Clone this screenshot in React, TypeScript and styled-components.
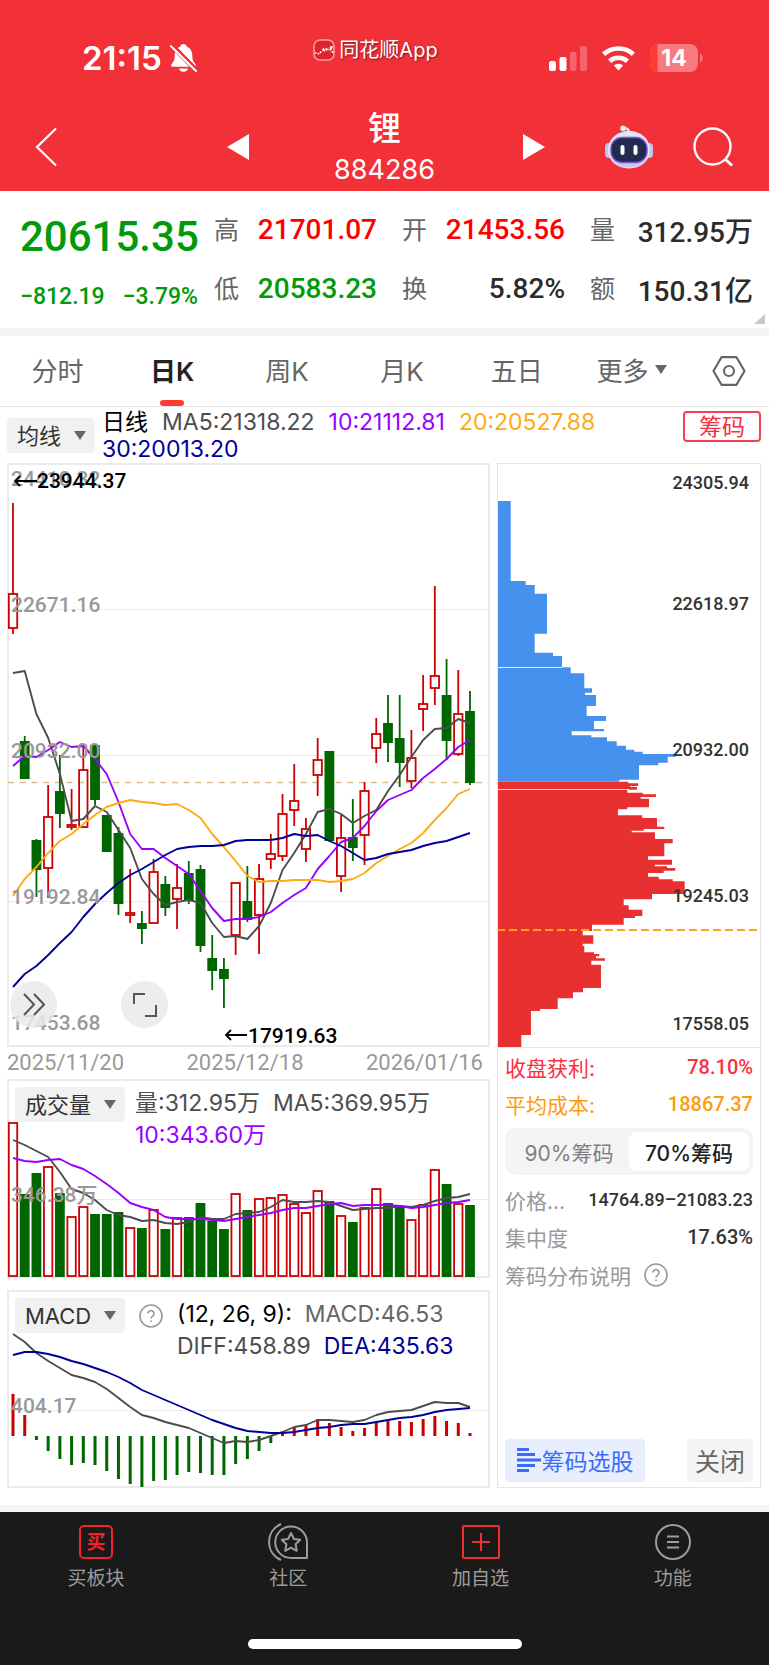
import React from "react";
import styled, { createGlobalStyle } from "styled-components";

const RED = "#cc0000";
const GREEN = "#006600";
const GRAY = "#4d4d4d";
const PURPLE = "#9900ff";
const ORANGE = "#ffaa11";
const NAVY = "#000099";
const LINE = "#ebebeb";
const UI = `Inter, "Noto Sans CJK SC", sans-serif`;
const NUM = `Roboto, "Noto Sans CJK SC", sans-serif`;

const GlobalStyle = createGlobalStyle`
  *, *::before, *::after { box-sizing: border-box; }
  body { margin: 0; background: #fff; font-family: ${UI}; color: #333; }
  button, select { font: inherit; color: inherit; border: 0; background: none; padding: 0; margin: 0; cursor: pointer; }
  dl, dt, dd, h1, p { margin: 0; font-weight: 400; }
  svg { display: block; }
`;

/* ---------- series ---------- */

type Candle = [up: 0 | 1, high: number, top: number, bottom: number, low: number];

const candles: Candle[] = [
  [1, 503, 594, 628, 634], [0, 736, 741, 779, 779], [0, 839, 840, 870, 897], [1, 785, 817, 868, 898],
  [0, 755, 791, 814, 828], [1, 789, 825, 827, 830], [1, 747, 770, 827, 827], [0, 745, 745, 800, 805],
  [0, 815, 815, 852, 852], [0, 827, 833, 904, 915], [1, 869, 913, 915, 923], [0, 911, 923, 929, 944],
  [1, 859, 872, 923, 923], [0, 876, 884, 908, 916], [1, 864, 888, 899, 929], [0, 861, 873, 901, 904],
  [0, 865, 869, 946, 952], [0, 935, 958, 971, 990], [0, 958, 969, 979, 1008], [1, 882, 883, 935, 955],
  [0, 866, 901, 920, 922], [1, 864, 879, 915, 954], [1, 834, 854, 859, 869], [1, 794, 814, 856, 861],
  [1, 764, 801, 810, 826], [1, 818, 829, 849, 862], [1, 738, 760, 775, 796], [0, 751, 751, 841, 841],
  [1, 815, 838, 876, 892], [0, 799, 837, 848, 861], [1, 782, 791, 835, 865], [1, 718, 734, 748, 763],
  [0, 695, 723, 743, 762], [0, 695, 738, 763, 787], [1, 730, 758, 781, 788], [1, 675, 704, 709, 731],
  [1, 586, 676, 688, 705], [0, 659, 695, 741, 760], [1, 670, 714, 754, 756], [0, 691, 711, 783, 785],
];

const ma5 = [673, 671, 714, 738, 774, 821, 819, 806, 812, 830, 848, 879, 894, 905, 902, 900, 903, 923, 937, 936, 939, 926, 903, 870, 853, 834, 812, 809, 814, 823, 816, 810, 791, 775, 757, 740, 729, 728, 719, 723];
const ma10 = [766, 756, 757, 750, 742, 747, 746, 759, 774, 802, 834, 849, 849, 858, 866, 874, 891, 908, 921, 919, 919, 917, 912, 903, 895, 888, 869, 856, 842, 838, 826, 811, 800, 795, 790, 778, 769, 759, 747, 740];
const ma20 = [896, 879, 867, 853, 841, 834, 824, 815, 807, 803, 800, 802, 803, 805, 804, 810, 818, 834, 847, 861, 876, 882, 881, 881, 880, 880, 880, 882, 881, 879, 873, 863, 856, 849, 843, 833, 820, 808, 794, 789];
const ma30 = [987, 974, 966, 955, 943, 932, 917, 904, 893, 883, 875, 869, 862, 855, 849, 847, 846, 846, 845, 841, 840, 840, 840, 838, 834, 836, 835, 841, 846, 853, 860, 858, 854, 852, 850, 846, 843, 841, 837, 833];

const volumes = [1123, 1195, 1174, 1167, 1194, 1217, 1207, 1215, 1215, 1213, 1228, 1229, 1210, 1230, 1218, 1218, 1204, 1222, 1230, 1194, 1211, 1199, 1198, 1195, 1204, 1213, 1191, 1202, 1216, 1223, 1208, 1189, 1204, 1207, 1220, 1205, 1170, 1185, 1204, 1206];
const vol5 = [1140, 1145, 1151, 1157, 1172, 1189, 1193, 1200, 1210, 1215, 1217, 1221, 1220, 1223, 1224, 1222, 1217, 1219, 1219, 1214, 1213, 1212, 1207, 1200, 1202, 1202, 1201, 1202, 1206, 1210, 1209, 1208, 1208, 1206, 1207, 1205, 1201, 1198, 1197, 1194];
const vol10 = [1158, 1161, 1162, 1160, 1159, 1165, 1169, 1176, 1184, 1193, 1203, 1207, 1210, 1217, 1219, 1219, 1219, 1220, 1221, 1219, 1217, 1215, 1213, 1210, 1208, 1208, 1206, 1204, 1203, 1206, 1205, 1205, 1205, 1206, 1208, 1207, 1205, 1203, 1202, 1200];

const macd = [1394, 1415, 1440, 1451, 1459, 1465, 1463, 1465, 1471, 1479, 1484, 1487, 1481, 1480, 1475, 1472, 1473, 1475, 1475, 1464, 1459, 1451, 1443, 1433, 1427, 1425, 1419, 1423, 1427, 1431, 1428, 1422, 1419, 1421, 1422, 1419, 1416, 1421, 1423, 1433];
const diff = [1334, 1342, 1353, 1361, 1368, 1375, 1378, 1382, 1389, 1398, 1407, 1415, 1418, 1422, 1425, 1428, 1433, 1438, 1443, 1441, 1442, 1440, 1436, 1432, 1427, 1425, 1420, 1420, 1421, 1422, 1420, 1415, 1412, 1411, 1410, 1406, 1402, 1403, 1403, 1407];
const dea = [1355, 1352, 1352, 1354, 1357, 1361, 1364, 1368, 1372, 1377, 1383, 1390, 1395, 1400, 1405, 1410, 1415, 1420, 1424, 1428, 1431, 1432, 1433, 1433, 1432, 1430, 1428, 1427, 1425, 1424, 1424, 1422, 1420, 1418, 1417, 1415, 1412, 1410, 1409, 1408];

/* chip profile: [end of the step, bar width], in thirds of a unit */
const lossSteps: [number, number][] = [
  [363, 65], [375, 110], [401, 137], [521, 174], [578, 137], [588, 192], [622, 219], [640, 245], [685, 286],
  [698, 309], [705, 288], [738, 321], [768, 293], [783, 351], [807, 315], [814, 345], [826, 248], [832, 307],
  [844, 354], [857, 383], [869, 411], [875, 436], [882, 461], [890, 561], [908, 536], [916, 508], [959, 450], [965, 391],
];
const gainSteps: [number, number][] = [
  [40, 418], [48, 448], [51, 424], [59, 444], [68, 415], [73, 461], [81, 501], [86, 455], [112, 480], [118, 415],
  [136, 387], [144, 460], [170, 504], [177, 526], [182, 464], [187, 428], [207, 498], [220, 551], [259, 526],
  [269, 477], [284, 549], [289, 497], [294, 534], [302, 559], [309, 524], [320, 477], [328, 509], [334, 551],
  [372, 587], [388, 489], [406, 404], [419, 419], [438, 460], [444, 438], [464, 404], [483, 309], [496, 281],
  [521, 313], [528, 281], [547, 286], [552, 315], [559, 331], [565, 321], [572, 348], [584, 307], [654, 336],
  [667, 282], [685, 252], [717, 206], [723, 153], [795, 126], [831, 97],
];

const xAt = (i: number) => 13 + (i * 457) / 39;

const Curve = ({ data, color }: { data: number[]; color: string }) => (
  <polyline points={data.map((y, i) => `${xAt(i).toFixed(1)},${y}`).join(" ")} fill="none" stroke={color} strokeWidth="1.9" strokeLinejoin="round" />
);

const stepPath = (start: number, originY: number, steps: [number, number][]) => {
  let d = `M499 ${(originY + start / 3).toFixed(1)}`;
  steps.forEach(([end, w]) => {
    d += `H${(490 + w / 3).toFixed(1)}V${(originY + end / 3).toFixed(1)}`;
  });
  return d + "H499Z";
};

/* ---------- header ---------- */

const Header = styled.header`
  background: #f23038;
  color: #fff;
`;
const StatusBar = styled.div`
  display: grid;
  grid-template-columns: 1fr auto 1fr;
  align-items: start;
  height: 104px;
  padding: 40px 66px 0 48px;
`;
const StatusSide = styled.div<{ $end?: boolean }>`
  display: flex;
  align-items: center;
  height: 36px;
  gap: ${(p) => (p.$end ? "15px" : "8px")};
  padding-left: ${(p) => (p.$end ? "0" : "34px")};
  justify-content: ${(p) => (p.$end ? "flex-end" : "flex-start")};
`;
const Clock = styled.span`
  font-size: 33px;
  font-weight: 600;
  line-height: 36px;
`;
const AppTag = styled.div`
  display: flex;
  align-items: center;
  gap: 4px;
  height: 20px;
  font-size: 20px;
  line-height: 20px;
  text-shadow: 1px 1px 2px rgba(0, 0, 0, 0.5);
`;
const TitleBar = styled.div`
  display: grid;
  grid-template-columns: 1fr 271px 1fr;
  align-items: center;
  height: 87px;
`;
const TitleSide = styled.div<{ $end?: boolean }>`
  display: flex;
  align-items: center;
  justify-content: space-between;
  padding: ${(p) => (p.$end ? "0 36px 2px 3px" : "0 0 2px 35px")};
`;
const IconGroup = styled.div`
  display: flex;
  align-items: center;
  gap: 40px;
`;
const IconButton = styled.button`
  display: grid;
  place-items: center;
`;
const Title = styled.div`
  text-align: center;
  h1 { font-size: 33px; font-weight: 500; line-height: 44px; }
  p { font-size: 27px; line-height: 40px; }
`;

/* ---------- quote ---------- */

const Quote = styled.section`
  position: relative;
  display: grid;
  grid-template-columns: 178px 1fr;
  column-gap: 16px;
  height: 137px;
  padding: 9px 16px 0 20px;
  font-family: ${NUM};
`;
const Price = styled.div`
  color: #009a0a;
  padding-top: 7px;
  font-weight: 500;
`;
const Last = styled.div`
  font-size: 42px;
  line-height: 59px;
`;
const Change = styled.div`
  display: flex;
  justify-content: space-between;
  font-size: 23px;
  line-height: 62px;
`;
const Stats = styled.dl`
  display: grid;
  grid-template-columns: repeat(3, 1fr);
  grid-auto-rows: 59px;
  column-gap: 25px;
`;
const Stat = styled.div<{ $color: string }>`
  display: flex;
  align-items: center;
  justify-content: space-between;
  white-space: nowrap;
  dt { padding-bottom: 3px; font-size: 25px; color: #666; }
  dd { font-size: 28px; font-weight: 500; color: ${(p) => p.$color}; }
`;
const Corner = styled.svg`
  position: absolute;
  right: 4px;
  bottom: 4px;
`;
const Band = styled.div<{ $h: number }>`
  height: ${(p) => p.$h}px;
  background: #f4f4f4;
`;

/* ---------- tabs ---------- */

const Tabs = styled.nav`
  display: grid;
  grid-template-columns: repeat(6, 1fr) 80px;
  height: 71px;
  border-bottom: 1px solid #e6e6e6;
`;
const Tab = styled.button<{ $active?: boolean }>`
  display: flex;
  align-items: center;
  justify-content: center;
  gap: 6px;
  padding-bottom: 4px;
  font-size: 26px;
  font-weight: ${(p) => (p.$active ? 600 : 400)};
  color: ${(p) => (p.$active ? "#222" : "#666")};
  position: relative;
  &::after {
    content: "";
    display: ${(p) => (p.$active ? "block" : "none")};
    position: absolute;
    bottom: 0;
    width: 24px;
    height: 6px;
    border-radius: 3px;
    background: #ff3b30;
  }
`;

/* ---------- indicator bars ---------- */

const Picker = styled.span`
  position: relative;
  flex: none;
  display: inline-flex;
  align-items: center;
  background: #f1f1f1;
  border-radius: 4px;
  select {
    appearance: none;
    height: 35px;
    padding: 0 33px 0 10px;
    font-size: 22px;
    color: #333;
  }
  svg { position: absolute; right: 9px; pointer-events: none; }
`;
const MaBar = styled.div`
  display: flex;
  align-items: flex-start;
  gap: 7px;
  height: 56px;
  padding: 2px 8px 0 7px;
  ${Picker} { margin-top: 9px; }
`;
const Values = styled.div<{ $lh: number; $gap: number }>`
  flex: 1;
  min-width: 0;
  display: flex;
  flex-wrap: wrap;
  column-gap: ${(p) => p.$gap}px;
  font-size: 23px;
  line-height: ${(p) => p.$lh}px;
`;
const Value = styled.span<{ $color: string }>`
  color: ${(p) => p.$color};
  white-space: nowrap;
`;
const ChipToggle = styled.button`
  flex: none;
  width: 78px;
  height: 31px;
  margin-top: 2px;
  border: 2px solid #f5404f;
  border-radius: 4px;
  color: #f5303f;
  font-size: 23px;
  line-height: 26px;
`;

/* ---------- charts ---------- */

const Board = styled.main`
  display: grid;
  grid-template-columns: minmax(0, 1fr) 264px;
  column-gap: 7px;
  padding: 0 8px 17px 7px;
`;
const Column = styled.div`
  display: flex;
  flex-direction: column;
`;
const Panel = styled.section`
  display: grid;
  border: 2px solid ${LINE};
  > * { grid-area: 1 / 1; }
`;
const Plot = styled.svg`
  width: 100%;
  height: auto;
  overflow: visible;
  text { font-family: ${NUM}; font-weight: 500; font-size: 21px; fill: #999; }
  text.mark { fill: #000; }
  text.chip { font-size: 18px; fill: #333; text-anchor: end; }
`;
const Tools = styled.div`
  align-self: end;
  display: flex;
  gap: 64px;
  padding: 0 1px 17px;
  z-index: 1;
`;
const RoundButton = styled.button`
  display: grid;
  place-items: center;
  width: 47px;
  height: 47px;
  border-radius: 50%;
  background: rgba(234, 234, 234, 0.85);
`;
const Dates = styled.div`
  display: flex;
  justify-content: space-between;
  padding: 0 7px 0 0;
  font-family: ${NUM};
  font-size: 22px;
  line-height: 32px;
  color: #999;
`;
const Legend = styled.div<{ $gap: number }>`
  align-self: start;
  display: flex;
  align-items: flex-start;
  gap: ${(p) => p.$gap}px;
  padding: 6px 0 0 6px;
  z-index: 1;
`;
const HelpButton = styled(IconButton)`
  height: 35px;
`;
const Spacer = styled.div`
  height: 12px;
`;

/* ---------- chip panel ---------- */

const ChipPanel = styled.aside`
  display: flex;
  flex-direction: column;
  border: 1px solid #e6e6e6;
`;
const ChipInfo = styled.div`
  flex: 1;
  display: flex;
  flex-direction: column;
  padding: 0 7px 5px;
  border-top: 1px solid #e6e6e6;
`;
const InfoRow = styled.div<{ $color: string; $value: string; $size?: number }>`
  display: flex;
  justify-content: space-between;
  align-items: center;
  height: 37px;
  font-size: 21px;
  color: ${(p) => p.$color};
  white-space: nowrap;
  b { font-family: ${NUM}; font-size: ${(p) => p.$size ?? 20}px; font-weight: 500; color: ${(p) => p.$value}; }
`;
const Segments = styled.div`
  display: grid;
  grid-template-columns: 1fr 1fr;
  height: 47px;
  margin: 6px 0;
  padding: 4px;
  border-radius: 10px;
  background: #f4f4f4;
`;
const Segment = styled.button<{ $active?: boolean }>`
  font-size: 21px;
  border-radius: 8px;
  white-space: nowrap;
  font-weight: ${(p) => (p.$active ? 500 : 400)};
  color: ${(p) => (p.$active ? "#222" : "#808080")};
  background: ${(p) => (p.$active ? "#fff" : "transparent")};
`;
const NoteButton = styled.button`
  display: flex;
  align-items: center;
  gap: 13px;
  height: 40px;
  font-size: 21px;
  color: #999;
`;
const ChipFooter = styled.div`
  display: flex;
  justify-content: space-between;
  margin-top: auto;
`;
const FooterButton = styled.button<{ $primary?: boolean }>`
  display: flex;
  align-items: center;
  justify-content: center;
  gap: 1px;
  height: 43px;
  padding-bottom: 2px;
  width: ${(p) => (p.$primary ? "140px" : "66px")};
  border-radius: 4px;
  font-size: ${(p) => (p.$primary ? "23px" : "25px")};
  color: ${(p) => (p.$primary ? "#3a6cf6" : "#666")};
  background: ${(p) => (p.$primary ? "#e9eeff" : "#f4f4f4")};
`;

/* ---------- bottom bar ---------- */

const Bottom = styled.footer`
  height: 153px;
  background: #1a1a1a;
  color: #9c9c9c;
`;
const BottomNav = styled.nav`
  display: grid;
  grid-template-columns: repeat(4, 1fr);
  height: 127px;
`;
const BottomLink = styled.a`
  display: flex;
  flex-direction: column;
  align-items: center;
  padding-top: 11px;
  gap: 4px;
  font-size: 19px;
  line-height: 28px;
  color: inherit;
  text-decoration: none;
`;
const HomeBar = styled.div`
  width: 274px;
  height: 10px;
  margin: 0 auto;
  border-radius: 5px;
  background: #fff;
`;

/* ---------- icons ---------- */

const Caret = ({ w = 12, h = 9 }: { w?: number; h?: number }) => (
  <svg width={w} height={h} viewBox="0 0 12 9" aria-hidden="true"><path d="M0 0H12L6 9Z" fill="#666" /></svg>
);
const Help = () => (
  <svg width="24" height="24" viewBox="0 0 24 24" fill="none" stroke="#999" strokeWidth="1.6" aria-hidden="true">
    <circle cx="12" cy="12" r="11" />
    <path d="M9 9.6a3 3 0 1 1 4.6 2.5c-1.1.8-1.6 1.2-1.6 2.5" />
    <circle cx="12" cy="17.2" r=".9" fill="#999" stroke="none" />
  </svg>
);
const BellOff = () => (
  <svg width="27" height="28" viewBox="0 0 27 28" aria-hidden="true">
    <path d="M13.500 0c1.800 0 3 1 3.200 2.700 3.800 1.200 5.600 4.500 5.600 8.600 0 5.200 1.200 6.500 3.200 8.900.8 1 .3 2.600-1.200 2.600H2.700c-1.500 0-2-1.600-1.200-2.600 2-2.400 3.200-3.700 3.200-8.900 0-4.100 1.800-7.400 5.600-8.600C10.500 1 11.700 0 13.500 0ZM9 24.500h9c-.4 2-2.200 3.300-4.500 3.300S9.400 26.500 9 24.500Z" fill="#fff" />
    <path d="M1.500 1L26 26" stroke="#f23038" strokeWidth="5" />
    <path d="M.8 2L26 27" stroke="#fff" strokeWidth="2" strokeLinecap="round" />
  </svg>
);
const AppLogo = () => (
  <svg width="22" height="22" viewBox="0 0 22 22" fill="none" aria-hidden="true">
    <rect x="1" y="1" width="20" height="20" rx="6" fill="#e0222b" stroke="#f9a0a3" strokeWidth="1.500" />
    <path d="M2 14.500l1.500-1M5.500 14v1.500M8 12.500l-1 1.500M9.500 11.500l1-1.500 1 2.500M13.500 9l-.5 2.500M14.500 10l1 1M17.500 7.500v3l1.500-2V7M19.500 14v-2" stroke="#fff" strokeWidth="1.500" />
  </svg>
);
const Signal = () => (
  <svg width="38" height="25" viewBox="0 0 38 25" fill="#fff" aria-hidden="true">
    <rect y="15" width="7" height="10" rx="2" />
    <rect x="10.500" y="11" width="7" height="14" rx="2" />
    <rect x="21" y="6" width="6.500" height="19" rx="2" opacity=".25" />
    <rect x="31" y="0" width="7" height="25" rx="2" opacity=".25" />
  </svg>
);
const Wifi = () => (
  <svg width="33" height="25" viewBox="0 0 33 25" aria-hidden="true">
    <path d="M16.500 24.500l-4.700-5a7 7 0 0 1 9.400 0Z" fill="#fff" />
    <path d="M7.600 15.300a13 13 0 0 1 17.800 0" fill="none" stroke="#fff" strokeWidth="4.600" />
    <path d="M1.600 8.300a22 22 0 0 1 29.800 0" fill="none" stroke="#fff" strokeWidth="4.600" />
  </svg>
);
const Battery = () => (
  <svg width="53" height="28" viewBox="0 0 53 28" aria-hidden="true">
    <rect width="48" height="28" rx="8" fill="#f77a7e" />
    <path d="M8 0H7.500V28H8a8 8 0 0 1-8-8V8a8 8 0 0 1 8-8Z" fill="#ff3b30" />
    <path d="M50 9.500c3.500 1.500 3.500 7.500 0 9Z" fill="#f77a7e" />
    <text x="24" y="22" textAnchor="middle" fontSize="23" fontWeight="700" fill="#fff">14</text>
  </svg>
);
const Robot = () => (
  <svg width="48" height="44" viewBox="0 0 48 44" aria-hidden="true">
    <path d="M24 8C24 4 22 3 19 3" stroke="#dcdcf2" strokeWidth="2.500" fill="none" />
    <circle cx="18" cy="3.200" r="2.800" fill="#e9e9f8" />
    <rect x="0" y="18" width="8" height="15" rx="4" fill="#c3c4ea" />
    <rect x="40" y="18" width="8" height="15" rx="4" fill="#c3c4ea" />
    <path d="M24 6c12 0 21 8 21 19 0 10-8 18.500-21 18.500S3 35 3 25C3 14 12 6 24 6Z" fill="#e3e3f6" />
    <path d="M6 33c4 7 10 9.500 18 9.500S38 40 42 33c-4 4-10 5-18 5S10 37 6 33Z" fill="#c9caec" />
    <rect x="6" y="12.500" width="36" height="25" rx="11" fill="#232a50" stroke="#7a50d8" strokeWidth="1.400" />
    <rect x="15.500" y="20" width="4" height="10" rx="2" fill="#fff" />
    <rect x="28.500" y="20" width="4" height="10" rx="2" fill="#fff" />
  </svg>
);

const stats: [string, string, string][] = [
  ["高", "21701.07", "#ff0000"], ["开", "21453.56", "#ff0000"], ["量", "312.95万", "#2b2b2b"],
  ["低", "20583.23", "#009a0a"], ["换", "5.82%", "#2b2b2b"], ["额", "150.31亿", "#2b2b2b"],
];

const Dropdown = ({ label, value }: { label: string; value: string }) => (
  <Picker>
    <select aria-label={label} defaultValue={value}><option>{value}</option></select>
    <Caret />
  </Picker>
);

export default function App() {
  return (
    <>
      <GlobalStyle />
      <Header>
        <StatusBar>
          <StatusSide><Clock>21:15</Clock><BellOff /></StatusSide>
          <AppTag><AppLogo /><span>同花顺App</span></AppTag>
          <StatusSide $end><Signal /><Wifi /><Battery /></StatusSide>
        </StatusBar>
        <TitleBar>
          <TitleSide>
            <IconButton aria-label="返回">
              <svg width="22" height="40" viewBox="0 0 22 40" fill="none" stroke="#fff" strokeWidth="2.200"><path d="M21 1.500L2 20L21 38.500" /></svg>
            </IconButton>
            <IconButton aria-label="上一个">
              <svg width="22" height="26" viewBox="0 0 22 26"><path d="M22 0V26L0 13Z" fill="#fff" /></svg>
            </IconButton>
          </TitleSide>
          <Title><h1>锂</h1><p>884286</p></Title>
          <TitleSide $end>
            <IconButton aria-label="下一个">
              <svg width="22" height="26" viewBox="0 0 22 26"><path d="M0 0V26L22 13Z" fill="#fff" /></svg>
            </IconButton>
            <IconGroup>
              <IconButton aria-label="智能助手"><Robot /></IconButton>
              <IconButton aria-label="搜索">
                <svg width="40" height="40" viewBox="0 0 40 40" fill="none" stroke="#fff" strokeWidth="2.400"><circle cx="19.500" cy="19.500" r="18" /><path d="M32 32l7 6.500" strokeWidth="3" /></svg>
              </IconButton>
            </IconGroup>
          </TitleSide>
        </TitleBar>
      </Header>

      <Quote>
        <Price>
          <Last>20615.35</Last>
          <Change><span>−812.19</span><span>−3.79%</span></Change>
        </Price>
        <Stats>
          {stats.map(([name, value, color]) => (
            <Stat key={name} $color={color}><dt>{name}</dt><dd>{value}</dd></Stat>
          ))}
        </Stats>
        <Corner width="11" height="10" viewBox="0 0 11 10" aria-hidden="true"><path d="M11 0V10H0Z" fill="#c8c8c8" /></Corner>
      </Quote>
      <Band $h={8} />

      <Tabs>
        <Tab>分时</Tab>
        <Tab $active aria-current="true">日K</Tab>
        <Tab>周K</Tab>
        <Tab>月K</Tab>
        <Tab>五日</Tab>
        <Tab aria-haspopup="menu">更多<Caret w={12} h={11} /></Tab>
        <IconButton aria-label="设置">
          <svg width="34" height="30" viewBox="0 0 34 30" fill="none" stroke="#666" strokeWidth="2.200" strokeLinejoin="round"><path d="M9.500 1.200H24.500L32.500 15L24.500 28.800H9.500L1.500 15Z" /><circle cx="17" cy="15" r="5" /></svg>
        </IconButton>
      </Tabs>

      <MaBar>
        <Dropdown label="主图指标" value="均线" />
        <Values $lh={27} $gap={14}>
          <Value $color="#000">日线</Value>
          <Value $color={GRAY}>MA5:21318.22</Value>
          <Value $color={PURPLE}>10:21112.81</Value>
          <Value $color={ORANGE}>20:20527.88</Value>
          <Value $color={NAVY}>30:20013.20</Value>
        </Values>
        <ChipToggle>筹码</ChipToggle>
      </MaBar>

      <Board>
        <Column>
          <Panel>
            <Plot viewBox="9 465 479 580" role="img" aria-label="日K线图">
              <path d="M9 609.500H488M9 755.500H488M9 901.500H488" stroke={LINE} strokeWidth="1" />
              <path d="M8 782.500H488" stroke="#e0bb8c" strokeWidth="1.300" strokeDasharray="6 5.700" />
              {candles.map(([up, high, top, bottom, low], i) => {
                const x = xAt(i);
                return up ? (
                  <g key={i} stroke={RED} strokeWidth="1.800" fill="none">
                    <path d={`M${x} ${high}V${top}M${x} ${bottom}V${low}`} />
                    <rect x={x - 4.2} y={top} width="8.400" height={bottom - top} />
                  </g>
                ) : (
                  <g key={i} fill={GREEN}>
                    <rect x={x - 0.9} y={high} width="1.800" height={low - high} />
                    <rect x={x - 4.9} y={top} width="9.800" height={bottom - top} />
                  </g>
                );
              })}
              <Curve data={ma5} color={GRAY} />
              <Curve data={ma10} color={PURPLE} />
              <Curve data={ma20} color={ORANGE} />
              <Curve data={ma30} color={NAVY} />
              <text x="11" y="486">24410.32</text>
              <text x="11" y="612">22671.16</text>
              <text x="11" y="758">20932.00</text>
              <text x="11" y="904">19192.84</text>
              <text x="11" y="1030">17453.68</text>
              <path d="M37 481H15M20 476L15 481L20 486M247 1035H226M231 1030L226 1035L231 1040" fill="none" stroke="#000" strokeWidth="1.800" />
              <text className="mark" x="37" y="488">23944.37</text>
              <text className="mark" x="248" y="1043">17919.63</text>
            </Plot>
            <Tools>
              <RoundButton aria-label="展开">
                <svg width="22" height="23" viewBox="0 0 22 23" fill="none" stroke="#555" strokeWidth="2"><path d="M1 1L11 11.500L1 22M11 1L21 11.500L11 22" /></svg>
              </RoundButton>
              <RoundButton aria-label="全屏">
                <svg width="24" height="24" viewBox="0 0 24 24" fill="none" stroke="#555" strokeWidth="2"><path d="M1 11V1H12M12 23H23V12" /></svg>
              </RoundButton>
            </Tools>
          </Panel>
          <Dates><span>2025/11/20</span><span>2025/12/18</span><span>2026/01/16</span></Dates>

          <Panel>
            <Plot viewBox="9 1081 479 195" role="img" aria-label="成交量图">
              <path d="M9 1199.500H488" stroke={LINE} strokeWidth="1" />
              {volumes.map((top, i) =>
                candles[i][0] ? (
                  <rect key={i} x={xAt(i) - 4.2} y={top} width="8.400" height={1276 - top} fill="#fff" stroke={RED} strokeWidth="1.800" />
                ) : (
                  <rect key={i} x={xAt(i) - 4.9} y={top - 1} width="9.800" height={1278 - top} fill={GREEN} />
                )
              )}
              <Curve data={vol5} color={GRAY} />
              <Curve data={vol10} color={PURPLE} />
              <text x="11" y="1202">346.38万</text>
            </Plot>
            <Legend $gap={10}>
              <Dropdown label="副图指标" value="成交量" />
              <Values $lh={32} $gap={13}>
                <Value $color={GRAY}>量:312.95万</Value>
                <Value $color={GRAY}>MA5:369.95万</Value>
                <Value $color={PURPLE}>10:343.60万</Value>
              </Values>
            </Legend>
          </Panel>
          <Spacer />

          <Panel>
            <Plot viewBox="9 1292 479 194" role="img" aria-label="MACD图">
              <path d="M9 1410.500H488" stroke={LINE} strokeWidth="1" />
              {macd.map((end, i) => (
                <rect key={i} x={xAt(i) - 1.5} y={Math.min(end, 1436)} width="3" height={Math.abs(end - 1436)} fill={end < 1436 ? RED : GREEN} />
              ))}
              <Curve data={diff} color={GRAY} />
              <Curve data={dea} color={NAVY} />
              <text x="11" y="1413">404.17</text>
            </Plot>
            <Legend $gap={14}>
              <Dropdown label="副图指标" value="MACD" />
              <HelpButton aria-label="MACD说明"><Help /></HelpButton>
              <Values $lh={32} $gap={13}>
                <Value $color="#000">(12, 26, 9):</Value>
                <Value $color="#666">MACD:46.53</Value>
                <Value $color={GRAY}>DIFF:458.89</Value>
                <Value $color={NAVY}>DEA:435.63</Value>
              </Values>
            </Legend>
          </Panel>
        </Column>

        <ChipPanel>
          <Plot viewBox="499 464 262 583" role="img" aria-label="筹码分布图">
            <path d={stepPath(123, 460, lossSteps)} fill="#4690ee" />
            <path d={stepPath(35, 770, gainSteps)} fill="#e93030" />
            <path d="M499 667.500H563M499 789.500H630" stroke="#fff" strokeOpacity=".8" strokeWidth="1" />
            <path d="M498 930H760" stroke="#ffa51f" strokeWidth="2" strokeDasharray="8 4" />
            <text className="chip" x="750" y="489">24305.94</text>
            <text className="chip" x="750" y="610">22618.97</text>
            <text className="chip" x="750" y="756">20932.00</text>
            <text className="chip" x="750" y="902">19245.03</text>
            <text className="chip" x="750" y="1030">17558.05</text>
          </Plot>
          <ChipInfo>
            <InfoRow $color="#fb2f43" $value="#fb2f43">收盘获利:<b>78.10%</b></InfoRow>
            <InfoRow $color="#ff9a0f" $value="#ff9a0f">平均成本:<b>18867.37</b></InfoRow>
            <Segments>
              <Segment aria-pressed="false">90%筹码</Segment>
              <Segment $active aria-pressed="true">70%筹码</Segment>
            </Segments>
            <InfoRow $color="#999" $value="#333" $size={18}>价格…<b>14764.89–21083.23</b></InfoRow>
            <InfoRow $color="#999" $value="#333">集中度<b>17.63%</b></InfoRow>
            <NoteButton>筹码分布说明<Help /></NoteButton>
            <ChipFooter>
              <FooterButton $primary>
                <svg width="24" height="24" viewBox="0 0 24 24" aria-hidden="true"><path d="M0 0H12V3H0ZM0 5H18V8H0ZM0 10.500H24V13.500H0ZM0 16H18V19H0ZM0 21H12V24H0Z" fill="#3a6cf6" /></svg>
                筹码选股
              </FooterButton>
              <FooterButton>关闭</FooterButton>
            </ChipFooter>
          </ChipInfo>
        </ChipPanel>
      </Board>
      <Band $h={7} />

      <Bottom>
        <BottomNav>
          <BottomLink href="#buy">
            <svg width="38" height="38" viewBox="0 0 38 38" aria-hidden="true">
              <rect x="3" y="3" width="32" height="32" rx="4" fill="none" stroke="#f5222d" strokeWidth="2" />
              <text x="19" y="26" textAnchor="middle" fontSize="19" fontWeight="700" fill="#f5222d">买</text>
            </svg>
            买板块
          </BottomLink>
          <BottomLink href="#community">
            <svg width="42" height="38" viewBox="0 0 42 38" fill="none" stroke="#9c9c9c" strokeWidth="2" strokeLinejoin="round" aria-hidden="true">
              <path d="M24 3.500A15.700 15.700 0 1 0 24 35H40V19.500A16 16 0 0 0 24 3.500Z" />
              <path d="M14 1C-2 8 -2 30 14 37" />
              <path d="M24 10l2.900 6 6.300.8-4.600 4.500 1.200 6.500L24 24.700l-5.800 3.100 1.200-6.500-4.600-4.500 6.300-.8Z" />
            </svg>
            社区
          </BottomLink>
          <BottomLink href="#watch">
            <svg width="38" height="38" viewBox="0 0 38 38" fill="none" stroke="#f0302f" strokeWidth="2" aria-hidden="true">
              <rect x="1" y="3" width="36" height="32" rx="1" />
              <path d="M10 19H28M19 10V28" />
            </svg>
            加自选
          </BottomLink>
          <BottomLink href="#more">
            <svg width="38" height="38" viewBox="0 0 38 38" fill="none" stroke="#9c9c9c" strokeWidth="2" aria-hidden="true">
              <circle cx="19" cy="19" r="17" />
              <path d="M13 13.500H25M13 19H25M13 24.500H25" />
            </svg>
            功能
          </BottomLink>
        </BottomNav>
        <HomeBar />
      </Bottom>
    </>
  );
}
